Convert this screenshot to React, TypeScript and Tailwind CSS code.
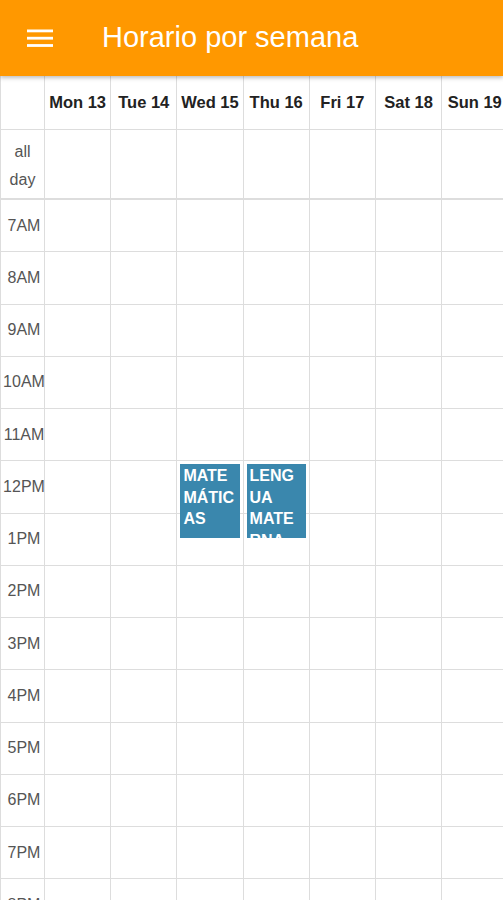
const days = ['Mon 13', 'Tue 14', 'Wed 15', 'Thu 16', 'Fri 17', 'Sat 18', 'Sun 19']
const hours = ['7AM', '8AM', '9AM', '10AM', '11AM', '12PM', '1PM', '2PM', '3PM', '4PM', '5PM', '6PM', '7PM', '8PM']

// events keyed by day index, placed in the 12PM row
const events: Record<number, string> = {
  2: 'MATEMÁTICAS',
  3: 'LENGUA MATERNA',
}

function MenuIcon() {
  return (
    <svg width="26" height="18" viewBox="0 0 26 18" className="shrink-0">
      <rect x="0" y="0.5" width="26" height="2.8" fill="white" />
      <rect x="0" y="7.8" width="26" height="2.8" fill="white" />
      <rect x="0" y="15.1" width="26" height="2.8" fill="white" />
    </svg>
  )
}

export default function App() {
  return (
    <div className="w-[503px] h-[900px] overflow-hidden bg-white font-['Liberation_Sans',Arial,sans-serif]">
      {/* Toolbar */}
      <header className="relative z-20 h-[76px] bg-[#ff9800] flex items-center pl-[27px] shadow-[0_2px_4px_rgba(0,0,0,0.25)]">
        <MenuIcon />
        <h1 className="ml-[49px] text-[29px] leading-none text-white font-normal pb-[1px]">Horario por semana</h1>
      </header>

      {/* Calendar */}
      <div className="w-[509px] border-l border-[#ddd]">
        {/* Day headers */}
        <div className="flex h-[54px] border-b border-[#ddd]">
          <div className="w-[44px] shrink-0 border-r border-[#ddd]" />
          {days.map((d) => (
            <div
              key={d}
              className="w-[66.2px] shrink-0 border-r border-[#ddd] flex items-center justify-center text-[16.5px] font-bold text-[#222] whitespace-nowrap"
            >
              {d}
            </div>
          ))}
        </div>

        {/* All day row */}
        <div className="flex h-[70px] border-b-2 border-[#ddd]">
          <div className="w-[44px] shrink-0 border-r border-[#ddd] flex flex-col items-center justify-center pt-[3px] text-[16px] leading-[28px] text-[#555]">
            <span>all</span>
            <span>day</span>
          </div>
          {days.map((d) => (
            <div key={d} className="w-[66.2px] shrink-0 border-r border-[#ddd]" />
          ))}
        </div>

        {/* Hour rows */}
        {hours.map((h) => (
          <div key={h} className="flex h-[52.25px] border-b border-[#ddd]">
            <div className="w-[44px] shrink-0 border-r border-[#ddd] flex items-center justify-center pl-[3px] text-[16px] text-[#555] whitespace-nowrap">
              {h}
            </div>
            {days.map((d, i) => (
              <div key={d} className="relative w-[66.2px] shrink-0 border-r border-[#ddd]">
                {h === '12PM' && events[i] && (
                  <div className="absolute z-10 top-[3px] left-[3px] right-[3px] h-[74px] overflow-hidden bg-[#3a87ad] pl-[3px] pr-[1px] pt-[1px] text-white text-[16px] font-bold leading-[21.5px] [overflow-wrap:break-word]">
                    {events[i]}
                  </div>
                )}
              </div>
            ))}
          </div>
        ))}
      </div>
    </div>
  )
}
